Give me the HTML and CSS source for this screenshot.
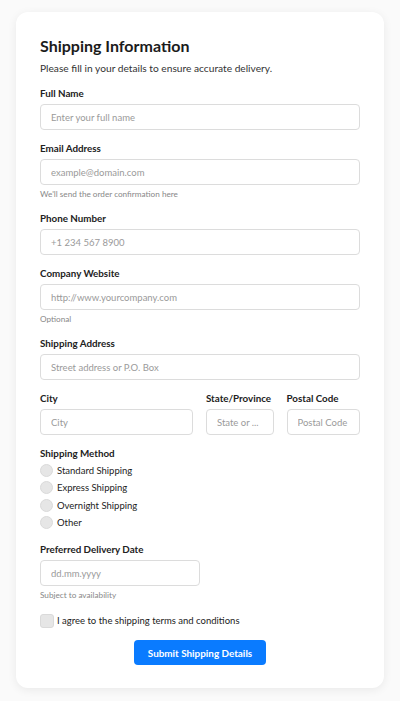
FILE: index.html
```html
<!DOCTYPE html>
<html lang="en">
<head>
<meta charset="utf-8">
<title>Shipping Information</title>
<link rel="stylesheet" href="styles.css">
</head>
<body>
<main class="card">
  <header class="head">
    <h1 class="title">Shipping Information</h1>
    <p class="subtitle">Please fill in your details to ensure accurate delivery.</p>
  </header>
  <form class="form">
    <div class="field">
      <label class="label">Full Name</label>
      <input class="input" type="text" placeholder="Enter your full name">
    </div>
    <div class="field">
      <label class="label">Email Address</label>
      <input class="input" type="email" placeholder="example@domain.com">
      <span class="help">We'll send the order confirmation here</span>
    </div>
    <div class="field">
      <label class="label">Phone Number</label>
      <input class="input" type="tel" placeholder="+1 234 567 8900">
    </div>
    <div class="field">
      <label class="label">Company Website</label>
      <input class="input" type="url" placeholder="http://www.yourcompany.com">
      <span class="help">Optional</span>
    </div>
    <div class="field">
      <label class="label">Shipping Address</label>
      <input class="input" type="text" placeholder="Street address or P.O. Box">
    </div>
    <div class="row">
      <div class="field">
        <label class="label">City</label>
        <input class="input" type="text" placeholder="City">
      </div>
      <div class="field">
        <label class="label">State/Province</label>
        <input class="input" type="text" placeholder="State or ...">
      </div>
      <div class="field">
        <label class="label">Postal Code</label>
        <input class="input" type="text" placeholder="Postal Code">
      </div>
    </div>
    <div class="field">
      <span class="label group-label">Shipping Method</span>
      <label class="option"><span class="radio"></span>Standard Shipping</label>
      <label class="option"><span class="radio"></span>Express Shipping</label>
      <label class="option"><span class="radio"></span>Overnight Shipping</label>
      <label class="option"><span class="radio"></span>Other</label>
    </div>
    <div class="field">
      <label class="label">Preferred Delivery Date</label>
      <input class="input input-date" type="text" placeholder="dd.mm.yyyy">
      <span class="help">Subject to availability</span>
    </div>
    <label class="option agree"><span class="checkbox"></span>I agree to the shipping terms and conditions</label>
    <div class="actions">
      <button class="submit" type="button">Submit Shipping Details</button>
    </div>
  </form>
</main>
</body>
</html>
```
FILE: styles.css
```css
* { box-sizing: border-box; }
html, body { margin: 0; padding: 0; }
body {
  background: #fafafa;
  font-family: Lato, "Open Sans", sans-serif;
  color: #222;
  padding: 12px 16px 13px;
}
.card {
  background: #fff;
  border-radius: 12px;
  box-shadow: 0 2px 10px rgba(0, 0, 0, 0.07);
  padding: 24px 24px 23px;
}
.head { margin-bottom: 10px; }
.title {
  margin: 0;
  font-size: 16px;
  line-height: 20px;
  font-weight: 700;
  color: #1b1b1b;
}
.subtitle {
  margin: 4px 0 0;
  font-size: 10.2px;
  line-height: 16px;
  color: #333;
}
.form {
  display: flex;
  flex-direction: column;
  gap: 11px;
}
.field {
  display: flex;
  flex-direction: column;
  min-width: 0;
}
.label {
  font-size: 9.8px;
  line-height: 14px;
  font-weight: 700;
  color: #222;
  margin-bottom: 4px;
}
.group-label { margin-bottom: 2px; }
.input {
  height: 26px;
  width: 100%;
  border: 1px solid #dcdcdc;
  border-radius: 4px;
  padding: 0 10px;
  font-family: inherit;
  font-size: 9.5px;
  color: #222;
  background: #fff;
  outline: none;
}
.input::placeholder { color: #9a9a9a; }
.input-date { width: 160px; }
.help {
  margin-top: 3px;
  font-size: 8.2px;
  line-height: 12px;
  color: #888;
}
.row {
  display: grid;
  grid-template-columns: 154fr 68fr 74fr;
  column-gap: 13px;
}
.option {
  display: flex;
  align-items: center;
  height: 17.3px;
  font-size: 9.5px;
  color: #222;
}
.radio {
  width: 13px;
  height: 13px;
  border-radius: 50%;
  background: #e6e6e6;
  border: 1px solid #dadada;
  flex: none;
  margin-right: 4px;
}
.checkbox {
  width: 14px;
  height: 14px;
  border-radius: 3px;
  background: #e6e6e6;
  border: 1px solid #dadada;
  flex: none;
  margin-right: 3px;
}
.actions {
  display: flex;
  justify-content: center;
  margin-top: 0;
}
.submit {
  width: 132px;
  height: 25px;
  border: none;
  border-radius: 4px;
  background: #0a7bff;
  color: #fff;
  font-family: inherit;
  font-size: 9.9px;
  font-weight: 700;
  cursor: pointer;
}
```
